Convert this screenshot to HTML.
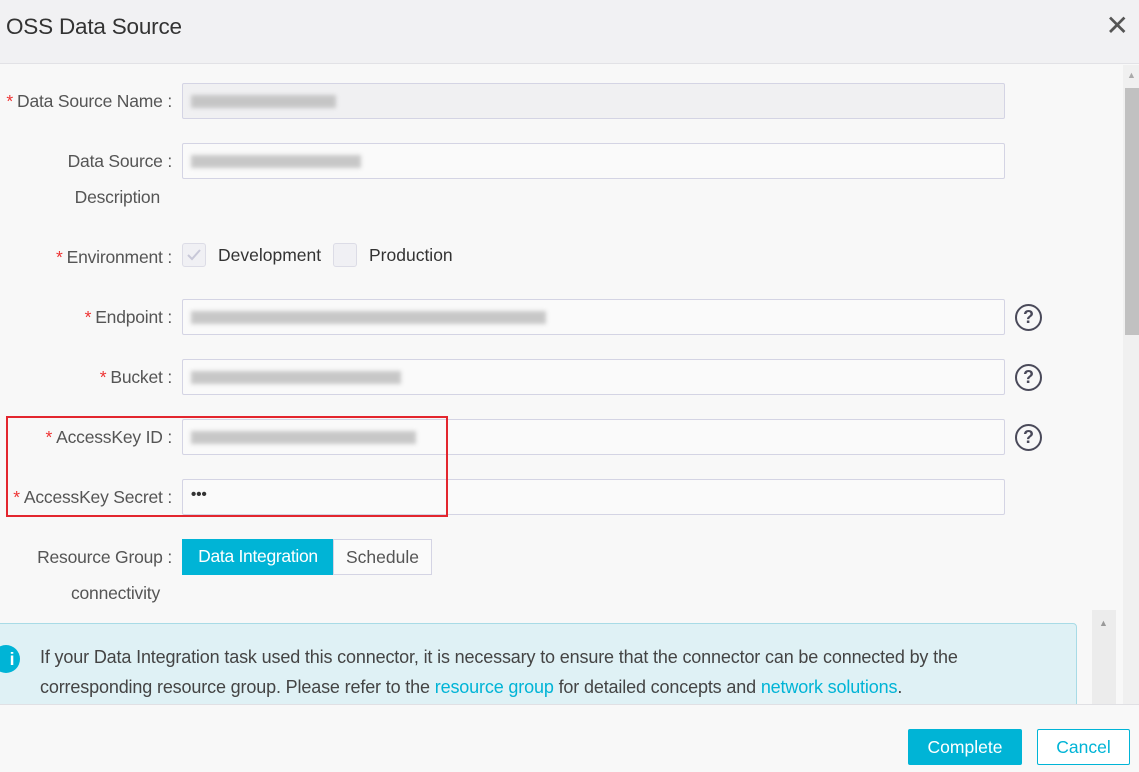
<!DOCTYPE html><html><head><meta charset="utf-8"><style>
*{box-sizing:border-box;margin:0;padding:0}
body{width:1139px;height:772px;overflow:hidden;background:#f8f8f8;font-family:"Liberation Sans",sans-serif;color:#555;position:relative;font-size:17.5px}
.hdr{position:absolute;left:0;top:0;width:1139px;height:64px;background:#f1f1f3;border-bottom:1px solid #e2e2e6}
.hdr h1{position:absolute;left:6px;top:14px;font-weight:normal;font-size:22.5px;color:#333;letter-spacing:-0.2px}
.x{position:absolute;right:10px;top:9px;font-size:28px;color:#555}
.lbl{position:absolute;right:967px;text-align:right;white-space:nowrap;letter-spacing:-0.2px}
.lbl b{color:#e33;font-weight:normal;margin-right:4px}
.in{position:absolute;left:182px;width:823px;height:36px;border:1px solid #d4d4e4;border-radius:2px;background:#fafafa}
.bl{position:absolute;left:8px;top:11px;height:13px;background:#bbb;filter:blur(2px);opacity:.8}
.q{position:absolute;left:1015px;width:27px;height:27px;border:2px solid #4a4a5a;border-radius:50%;text-align:center;font-size:18px;line-height:23px;color:#4a4a5a;font-weight:bold}
.cb{position:absolute;top:243px;width:24px;height:24px;border:1px solid #dcdce6;border-radius:3px;background:#f0f0f4}
</style></head><body>
<div class="hdr"><h1>OSS Data Source</h1><div class="x">✕</div></div>

<div class="lbl" style="top:91px"><b>*</b>Data Source Name :</div>
<div class="in" style="top:83px;background:#f0f0f2"><div class="bl" style="width:145px"></div></div>

<div class="lbl" style="top:151px">Data Source :</div>
<div class="lbl" style="top:187px;right:979px">Description</div>
<div class="in" style="top:143px"><div class="bl" style="width:170px"></div></div>

<div class="lbl" style="top:247px"><b>*</b>Environment :</div>
<div class="cb" style="left:182px"><svg width="22" height="22"><path d="M5 11 L9 15 L17 6" stroke="#c8c8d8" stroke-width="2" fill="none"/></svg></div>
<div style="position:absolute;left:218px;top:245px;color:#333">Development</div>
<div class="cb" style="left:333px"></div>
<div style="position:absolute;left:369px;top:245px;color:#333">Production</div>

<div class="lbl" style="top:307px"><b>*</b>Endpoint :</div>
<div class="in" style="top:299px"><div class="bl" style="width:355px"></div></div>
<div class="q" style="top:304px">?</div>

<div class="lbl" style="top:367px"><b>*</b>Bucket :</div>
<div class="in" style="top:359px"><div class="bl" style="width:210px"></div></div>
<div class="q" style="top:364px">?</div>

<div class="lbl" style="top:427px"><b>*</b>AccessKey ID :</div>
<div class="in" style="top:419px"><div class="bl" style="width:225px"></div></div>
<div class="q" style="top:424px">?</div>

<div class="lbl" style="top:487px"><b>*</b>AccessKey Secret :</div>
<div class="in" style="top:479px"><span style="position:absolute;left:8px;top:6px;color:#333;font-weight:bold;font-size:15px">•••</span></div>
<div style="position:absolute;left:6px;top:416px;width:442px;height:101px;border:2px solid #e3262e"></div>

<div class="lbl" style="top:547px">Resource Group :</div>
<div class="lbl" style="top:583px;right:979px">connectivity</div>
<div style="position:absolute;left:182px;top:539px;width:152px;height:36px;background:#00b4d6;color:#fff;text-align:center;line-height:34px;letter-spacing:-0.3px">Data Integration</div>
<div style="position:absolute;left:333px;top:539px;width:99px;height:36px;border:1px solid #d4d4e4;text-align:center;line-height:34px;color:#555;background:#fafafa">Schedule</div>

<div style="position:absolute;left:-4px;top:623px;width:1081px;height:90px;background:#dff1f5;border:1px solid #a8dbe6;border-radius:4px"></div>
<div style="position:absolute;left:-8px;top:645px;width:28px;height:28px;border-radius:50%;background:#00b4d6;color:#fff;text-align:center;font-weight:bold;line-height:28px;padding-left:12px">i</div>
<div style="position:absolute;left:40px;top:642px;width:945px;line-height:30px;color:#444;letter-spacing:-0.15px;font-size:18px">If your Data Integration task used this connector, it is necessary to ensure that the connector can be connected by the corresponding resource group. Please refer to the <span style="color:#00b4d6">resource group</span> for detailed concepts and <span style="color:#00b4d6">network solutions</span>.</div>
<div style="position:absolute;left:1092px;top:610px;width:24px;height:95px;background:#ececec"></div>
<div style="position:absolute;left:1099px;top:618px;font-size:9px;color:#999">▲</div>
<div style="position:absolute;left:1130px;top:684px;font-size:9px;color:#555">▼</div>

<div style="position:absolute;left:0;top:704px;width:1139px;height:68px;background:#f8f8f8;border-top:1px solid #e0e0e4"></div>
<div style="position:absolute;left:908px;top:729px;width:114px;height:36px;background:#00b4d6;color:#fff;text-align:center;line-height:36px;border-radius:2px">Complete</div>
<div style="position:absolute;left:1037px;top:729px;width:93px;height:36px;border:1px solid #00b4d6;color:#00b4d6;text-align:center;line-height:34px;border-radius:2px;background:#fff">Cancel</div>

<div style="position:absolute;left:1123px;top:65px;width:16px;height:639px;background:#f0f0f0"></div>
<div style="position:absolute;left:1127px;top:70px;font-size:9px;color:#aaa">▲</div>
<div style="position:absolute;left:1125px;top:88px;width:14px;height:247px;background:#c1c1c1"></div>
</body></html>
